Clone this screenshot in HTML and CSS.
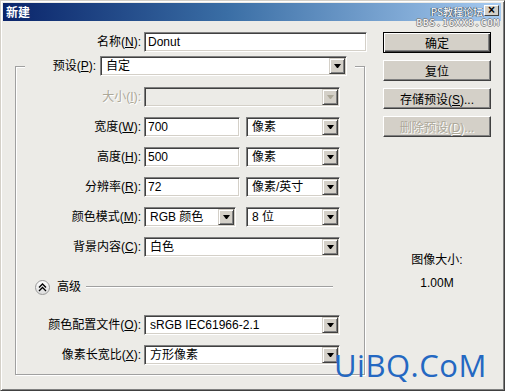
FILE: index.html
```html
<!DOCTYPE html>
<html lang="zh-CN">
<head>
  <meta charset="UTF-8">
  <title>新建</title>
  <link rel="stylesheet" href="styles.css">
</head>
<body>
  <div class="window">
    <div class="titlebar">
      <span class="title">新建</span>
      <span class="close">×</span>
    </div>

    <div class="mark">
      <div class="mark-top">PS教程论坛</div>
      <div class="mark-bottom">BBS.16XX8.COM</div>
    </div>

    <div class="body">
      <div class="form">
        <div class="row name-row">
          <span class="label">名称(<u>N</u>):</span>
          <div class="field w-name">Donut</div>
        </div>

        <fieldset class="group">
          <legend class="preset">
            <span class="label">预设(<u>P</u>):</span>
            <div class="field select w-preset"><span>自定</span><i class="drop"></i></div>
          </legend>

          <div class="group-body">
            <div class="row">
              <span class="label disabled">大小(<u>I</u>):</span>
              <div class="field select off w-full"><span></span><i class="drop"></i></div>
            </div>
            <div class="row">
              <span class="label">宽度(<u>W</u>):</span>
              <div class="field w-num">700</div>
              <div class="field select w-unit"><span>像素</span><i class="drop"></i></div>
            </div>
            <div class="row">
              <span class="label">高度(<u>H</u>):</span>
              <div class="field w-num">500</div>
              <div class="field select w-unit"><span>像素</span><i class="drop"></i></div>
            </div>
            <div class="row">
              <span class="label">分辨率(<u>R</u>):</span>
              <div class="field w-num">72</div>
              <div class="field select w-unit"><span>像素/英寸</span><i class="drop"></i></div>
            </div>
            <div class="row">
              <span class="label">颜色模式(<u>M</u>):</span>
              <div class="field select w-mode"><span>RGB 颜色</span><i class="drop"></i></div>
              <div class="field select w-bits"><span>8 位</span><i class="drop"></i></div>
            </div>
            <div class="row">
              <span class="label">背景内容(<u>C</u>):</span>
              <div class="field select w-full"><span>白色</span><i class="drop"></i></div>
            </div>

            <div class="advanced">
              <span class="toggle">
                <svg width="9" height="9" viewBox="0 0 9 9">
                  <path d="M1 4.5 L4.5 1 L8 4.5 M1 8 L4.5 4.5 L8 8" fill="none" stroke="#000" stroke-width="1.3"/>
                </svg>
              </span>
              <span class="adv-text">高级</span>
              <span class="rule"></span>
            </div>

            <div class="row">
              <span class="label">颜色配置文件(<u>O</u>):</span>
              <div class="field select w-full"><span>sRGB IEC61966-2.1</span><i class="drop"></i></div>
            </div>
            <div class="row">
              <span class="label">像素长宽比(<u>X</u>):</span>
              <div class="field select w-full"><span>方形像素</span><i class="drop"></i></div>
            </div>
          </div>
        </fieldset>
      </div>

      <div class="side">
        <button class="btn default">确定</button>
        <button class="btn">复位</button>
        <button class="btn">存储预设(<u>S</u>)...</button>
        <button class="btn" disabled>删除预设(<u>D</u>)...</button>
        <div class="size-info">
          <div>图像大小:</div>
          <div class="size-value">1.00M</div>
        </div>
      </div>
    </div>

    <div class="brand">UiBQ.CoM</div>
  </div>
</body>
</html>
```

FILE: styles.css
```css
body {
  margin: 0;
  font-family: "Liberation Sans", "Noto Sans CJK SC", sans-serif;
  font-size: 12px;
  color: #000;
  background: #fff;
}

u {
  text-decoration: underline;
  text-underline-offset: 1px;
}

.window {
  position: relative;
  width: 505px;
  height: 391px;
  box-sizing: border-box;
  padding: 2px 3px 2px 2px;
  background: #ecebe7;
  border: 1px solid #d4d0c8;
  border-right-color: #404040;
  border-bottom-color: #404040;
  box-shadow: inset 1px 1px #fff, inset -1px -1px #808080;
}

/* title bar */
.titlebar {
  height: 18px;
  display: flex;
  align-items: center;
  padding: 0 2px 0 3px;
  background: linear-gradient(to right, #0a246a, #3a6ea5 45%, #a6caf0);
}

.title {
  color: #fff;
  font-weight: bold;
  font-size: 12px;
  font-family: "Noto Sans CJK SC", sans-serif;
  line-height: 18px;
}

.close {
  align-self: flex-start;
  margin: 2px 0 0 auto;
  width: 15px;
  height: 11px;
  box-sizing: border-box;
  background: #d4d0c8;
  border: 1px solid;
  border-color: #fff #404040 #404040 #fff;
  font-size: 12px;
  font-weight: bold;
  line-height: 8px;
  text-align: center;
}

/* forum watermark over the title bar */
.mark {
  position: absolute;
  top: 4px;
  right: 4px;
  text-align: right;
  font-family: "DejaVu Sans Mono", monospace;
  color: #fff;
}

.mark-top {
  font-family: "Noto Sans CJK SC", sans-serif;
  font-size: 10px;
  line-height: 13px;
  margin-right: 17px;
  text-shadow: 0 0 1px #345, 1px 0 0 #567, -1px 0 0 #567;
}

.mark-bottom {
  font-size: 9px;
  line-height: 11px;
  letter-spacing: 1px;
  color: #fff;
  text-shadow: 1px 0 0 #888, -1px 0 0 #888, 0 1px 0 #888, 0 -1px 0 #888;
}

/* main area */
.body {
  display: flex;
  padding-top: 11px;
}

.form {
  width: 364px;
}

.row {
  display: flex;
  align-items: center;
  height: 20px;
  margin-bottom: 10px;
}

.row:last-child {
  margin-bottom: 0;
}

.name-row {
  margin-bottom: 0;
}

.label {
  box-sizing: border-box;
  text-align: right;
  padding-right: 3px;
  white-space: nowrap;
  line-height: 16px;
}

.name-row .label {
  width: 141px;
}

.group .label {
  width: 128px;
}

.label.disabled {
  color: #aca899;
  text-shadow: 1px 1px #fff;
}

.field {
  box-sizing: border-box;
  height: 20px;
  display: flex;
  align-items: center;
  padding: 0 0 0 3px;
  background: #fff;
  border: 1px solid;
  border-color: #808080 #fff #fff #808080;
  box-shadow: inset 1px 1px #404040, inset -1px -1px #d4d0c8;
  white-space: nowrap;
  line-height: 16px;
}

.select span {
  flex: 1;
  padding-left: 2px;
}

.drop {
  position: relative;
  width: 16px;
  height: 16px;
  margin-right: 1px;
  box-sizing: border-box;
  background: #d4d0c8;
  border: 1px solid;
  border-color: #d4d0c8 #404040 #404040 #d4d0c8;
  box-shadow: inset 1px 1px #fff, inset -1px -1px #808080;
}

.drop::after {
  content: '';
  position: absolute;
  left: 4px;
  top: 5px;
  width: 1px;
  border-left: 3px solid transparent;
  border-right: 3px solid transparent;
  border-top: 4px solid #000;
}

.select.off {
  background: #ecebe7;
}

.select.off .drop::after {
  border-top-color: #aca899;
}

.w-name { width: 223px; }
.w-preset { width: 247px; }
.w-full { width: 196px; }
.w-num { width: 96px; }
.w-unit { width: 94px; margin-left: 6px; }
.w-mode { width: 92px; }
.w-bits { width: 94px; margin-left: 10px; }

/* preset group box */
.group {
  margin: 4px 0 0 12px;
  width: 350px;
  min-width: 0;
  box-sizing: border-box;
  padding: 0 0 9px;
  border: 1px solid #a0a0a0;
  box-shadow: 1px 1px #fff, inset 1px 1px #fff;
}

.preset {
  display: flex;
  align-items: center;
  margin-left: 9px;
  padding: 0 8px 0 0;
  background: #ecebe7;
}

.group .preset .label {
  width: 75px;
  padding-right: 4px;
}

.group-body {
  padding-top: 11px;
}

.advanced {
  display: flex;
  align-items: center;
  height: 16px;
  margin: 22px 31px 20px 19px;
}

.toggle {
  width: 15px;
  height: 15px;
  box-sizing: border-box;
  display: flex;
  align-items: center;
  justify-content: center;
  border: 1px solid #9a9a9a;
  border-radius: 50%;
  background: linear-gradient(#fff, #dcdcdc);
}

.adv-text {
  margin-left: 7px;
  line-height: 16px;
}

.rule {
  flex: 1;
  margin-left: 5px;
  border-top: 1px solid #a0a0a0;
  border-bottom: 1px solid #fff;
}

/* buttons column */
.side {
  width: 108px;
  margin-left: 16px;
  display: flex;
  flex-direction: column;
  gap: 7px;
}

.btn {
  height: 21px;
  padding: 0;
  font: inherit;
  color: #000;
  background: #d4d0c8;
  border: 1px solid;
  border-color: #fff #404040 #404040 #fff;
  box-shadow: inset -1px -1px #808080;
}

.btn.default {
  border-color: #000;
  box-shadow: inset 1px 1px #fff, inset -1px -1px #404040, inset -2px -2px #808080;
}

.btn:disabled {
  color: #aca899;
  text-shadow: 1px 1px #fff;
}

.size-info {
  margin-top: 108px;
  text-align: center;
  line-height: 16px;
}

.size-value {
  margin-top: 7px;
}

/* site watermark over the corner */
.brand {
  position: absolute;
  left: 333px;
  top: 349px;
  font-family: "Open Sans", sans-serif;
  font-size: 31px;
  line-height: 31px;
  letter-spacing: 0.5px;
  color: #2468c2;
}
```
